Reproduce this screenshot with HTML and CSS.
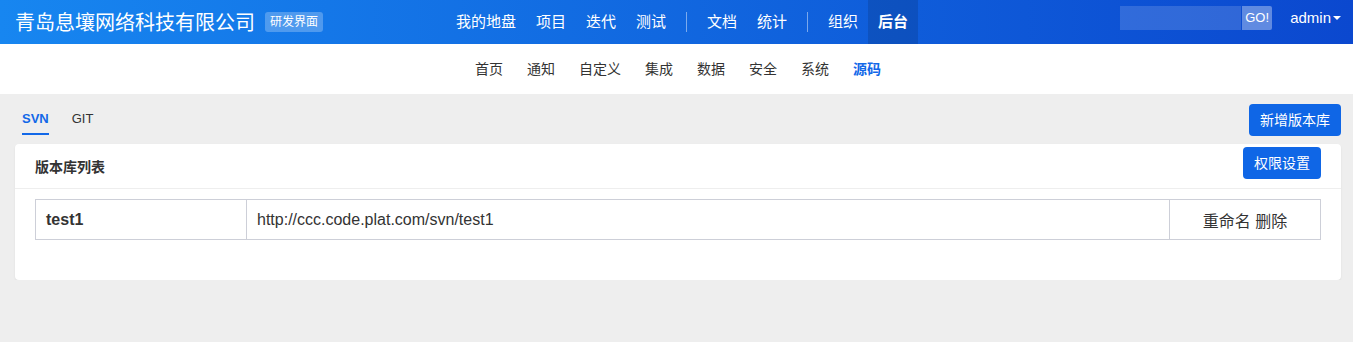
FILE: index.html
```html
<!DOCTYPE html>
<html lang="zh-CN">
<head>
<meta charset="utf-8" />
<title>源码 - 后台</title>
<link rel="stylesheet" href="styles.css">
</head>
<body>
<div class="header">
	<div class="brand">
		<span class="company">青岛息壤网络科技有限公司</span>
		<span class="badge">研发界面</span>
	</div>
	<div class="mainnav">
		<a>我的地盘</a>
		<a>项目</a>
		<a>迭代</a>
		<a>测试</a>
		<i class="sep"></i>
		<a>文档</a>
		<a>统计</a>
		<i class="sep"></i>
		<a>组织</a>
		<a class="active">后台</a>
	</div>
	<div class="tools">
		<div class="search">
			<span class="box"></span>
			<span class="go">GO!</span>
		</div>
		<span class="user">admin<i class="caret"></i></span>
	</div>
</div>
<div class="subnav">
	<a>首页</a>
	<a>通知</a>
	<a>自定义</a>
	<a>集成</a>
	<a>数据</a>
	<a>安全</a>
	<a>系统</a>
	<a class="on">源码</a>
</div>
<div class="main">
	<div class="toolbar">
		<div class="tabs">
			<a class="on">SVN</a>
			<a>GIT</a>
		</div>
		<a class="btn">新增版本库</a>
	</div>
	<div class="panel">
		<div class="panel-head">
			<span class="title">版本库列表</span>
			<a class="btn">权限设置</a>
		</div>
		<div class="panel-body">
			<table class="repos">
				<tr>
					<td class="name">test1</td>
					<td class="url">http://ccc.code.plat.com/svn/test1</td>
					<td class="ops">重命名 删除</td>
				</tr>
			</table>
		</div>
	</div>
</div>
</body>
</html>
```

FILE: styles.css
```css
*{
	margin:0;
	padding:0;
	box-sizing:border-box;}
body{
	background:#eee;
	color:#333;
	font-family:"Liberation Sans","Noto Sans CJK SC",sans-serif;
	font-size:14px;}
a{
	cursor:pointer;}

/* 顶部导航 */
.header{
	height:44px;
	display:grid;
	grid-template-columns:1fr auto 1fr;
	align-items:center;
	background:linear-gradient(to right,#1786f0,#0b48cf);
	color:#fff;}
.brand{
	display:flex;
	align-items:center;
	padding-left:15px;}
.company{
	font-size:20px;
	line-height:24px;
	font-family:"Noto Sans CJK SC",sans-serif;}
.badge{
	margin-left:10px;
	font-size:12px;
	line-height:20px;
	padding:0 5px;
	border-radius:3px;
	background:rgba(255,255,255,.25);}
.mainnav{
	display:flex;
	align-items:center;
	height:44px;
	margin-left:11px;}
.mainnav a{
	display:block;
	padding:0 10px;
	font-size:15px;
	line-height:44px;}
.mainnav a.active{
	background:rgba(0,0,0,.12);
	font-weight:bold;}
.mainnav .sep{
	width:1px;
	height:20px;
	margin:0 10px;
	background:rgba(255,255,255,.45);}
.tools{
	display:flex;
	justify-content:flex-end;
	align-items:center;
	padding-right:12px;}
.search{
	display:flex;
	height:24px;
	margin-top:-8px;}
.search .box{
	width:121px;
	background:rgba(255,255,255,.15);}
.search .go{
	width:30px;
	margin-left:1px;
	font-size:13px;
	line-height:24px;
	text-align:center;
	border-radius:0 2px 2px 0;
	background:rgba(255,255,255,.35);}
.user{
	margin-left:18px;
	font-size:15px;
	line-height:20px;
	margin-top:-8px;}
.caret{
	display:inline-block;
	margin-left:2px;
	vertical-align:3px;
	border-top:4px solid #fff;
	border-left:4px solid transparent;
	border-right:4px solid transparent;}

/* 二级导航 */
.subnav{
	height:50px;
	display:flex;
	justify-content:center;
	align-items:center;
	background:#fff;
	padding-left:3px;}
.subnav a{
	padding:0 12px;
	line-height:20px;
	color:#333;}
.subnav a.on{
	color:#1268e8;
	font-weight:bold;}

/* 内容 */
.main{
	padding:10px 12px 0 15px;}
.toolbar{
	display:flex;
	justify-content:space-between;
	align-items:flex-start;
	height:40px;}
.tabs{
	display:flex;
	padding-left:7px;}
.tabs a{
	margin-right:23px;
	padding-top:6px;
	line-height:17px;
	padding-bottom:6px;
	font-size:13px;
	border-bottom:2px solid transparent;}
.tabs a.on{
	color:#1268e8;
	font-weight:bold;
	border-bottom-color:#1268e8;}
.btn{
	display:block;
	height:32px;
	line-height:32px;
	padding:0 11px;
	border-radius:4px;
	background:#0f66e6;
	color:#fff;}
.panel{
	background:#fff;
	border-radius:4px;
	box-shadow:0 1px 2px rgba(0,0,0,.08);}
.panel-head{
	height:45px;
	display:flex;
	justify-content:space-between;
	align-items:center;
	padding:0 20px;
	border-bottom:1px solid #eee;}
.panel-head .title{
	font-weight:bold;
	font-size:14px;}
.panel-head .btn{
	margin-top:-7px;}
.panel-body{
	padding:10px 20px 40px;}
.repos{
	width:100%;
	border-collapse:collapse;
	font-size:16px;}
.repos td{
	height:40px;
	padding:0 10px;
	border:1px solid #cdcfd8;}
.repos .name{
	width:211px;
	font-weight:bold;}
.repos .ops{
	width:151px;
	text-align:center;}
```
